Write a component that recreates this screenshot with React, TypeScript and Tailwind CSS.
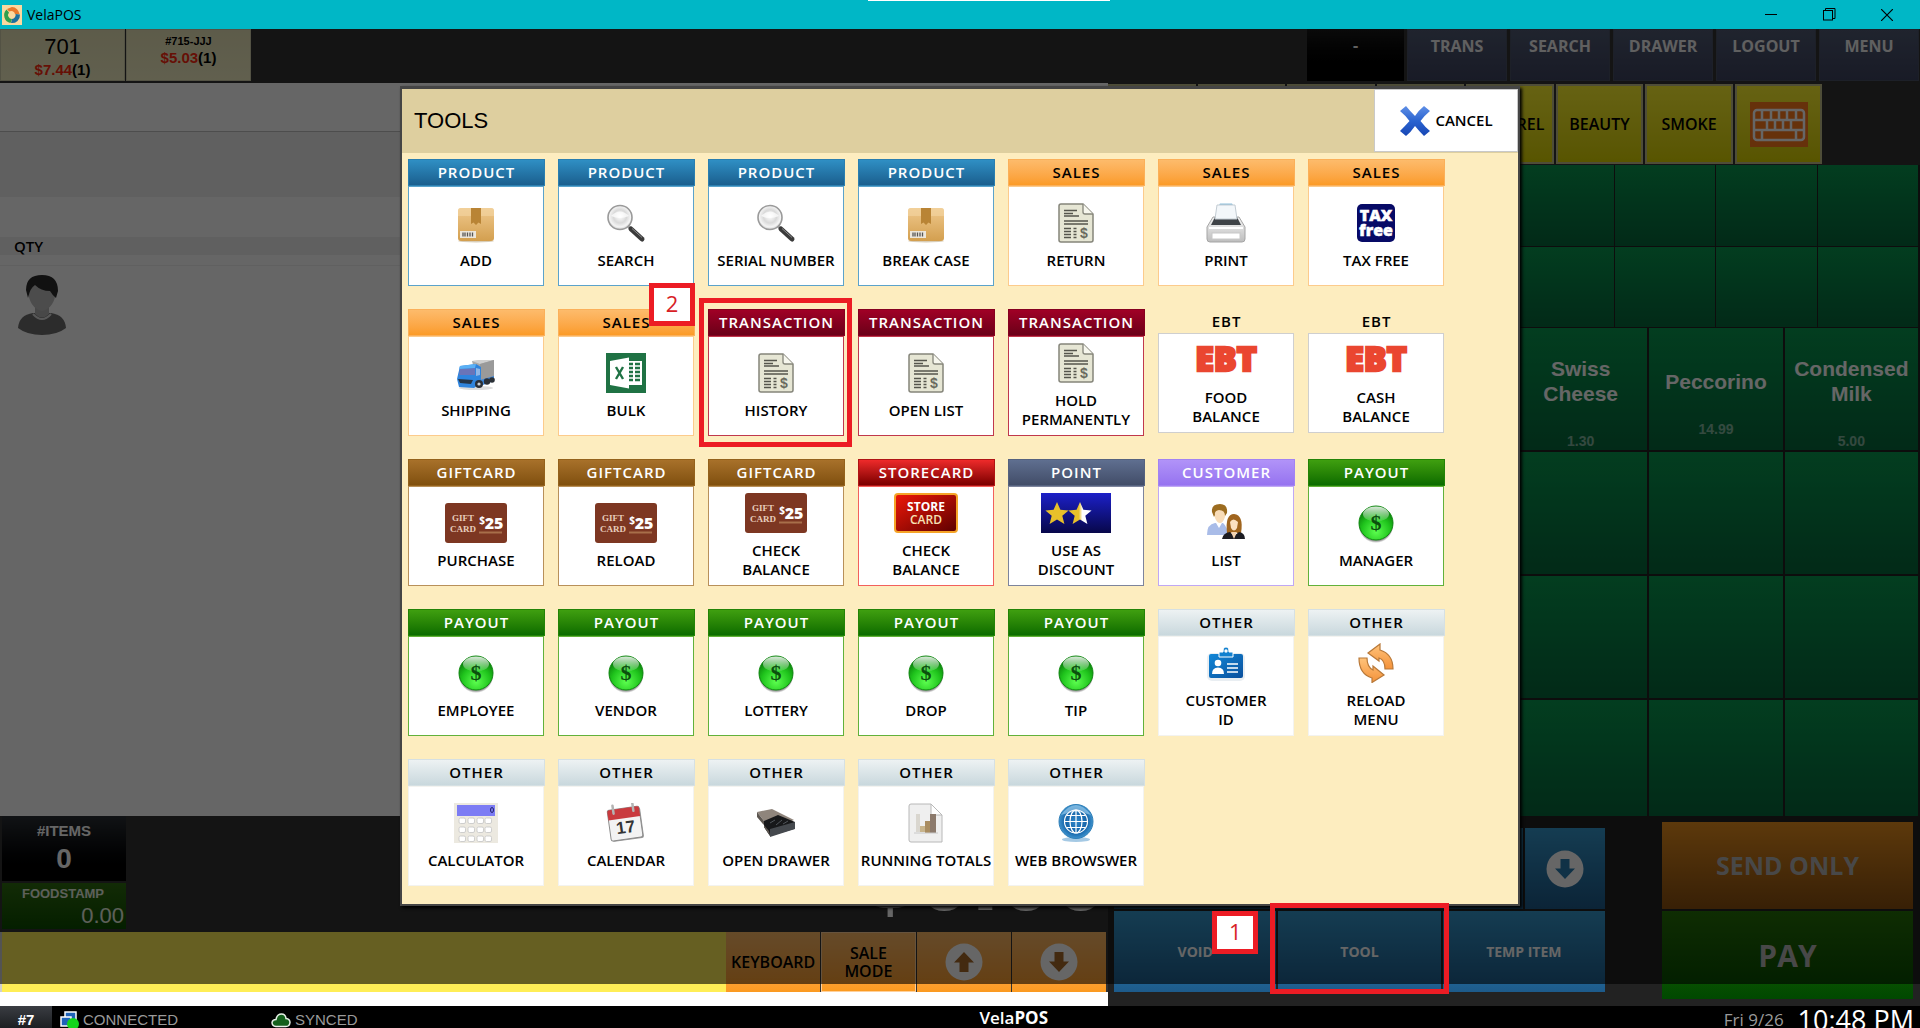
import React from 'react';

type IconName =
  | 'box' | 'lens' | 'doc' | 'printer' | 'taxfree' | 'truck' | 'excel' | 'ebt' | 'gift'
  | 'storecard' | 'stars' | 'people' | 'dollar' | 'badge' | 'reload' | 'calculator'
  | 'calendar' | 'drawer' | 'totals' | 'globe';

interface Tool {
  group: string;
  label: string;
  icon: IconName;
  marked?: boolean;
}

const groupStyles: Record<string, { head: string; body: string }> = {
  PRODUCT: { head: 'bg-linear-to-b from-[#2f8fc4] to-[#1b5f8e] border-[#2b7fb0] text-white', body: 'border-[#5ba3cb]' },
  SALES: { head: 'bg-linear-to-b from-[#fdbb6b] to-[#fb9b26] border-[#fbb05a] text-black', body: 'border-[#fccb8c]' },
  TRANSACTION: { head: 'bg-linear-to-b from-[#a00026] to-[#6b0018] border-[#86001f] text-white', body: 'border-[#c0384c]' },
  GIFTCARD: { head: 'bg-linear-to-b from-[#a8712a] to-[#80500e] border-[#94621c] text-white', body: 'border-[#b8905a]' },
  STORECARD: { head: 'bg-linear-to-b from-[#ee2a2a] to-[#7c0000] border-[#b01414] text-white', body: 'border-[#f2605c]' },
  POINT: { head: 'bg-linear-to-b from-[#5f6f90] to-[#424d68] border-[#55627f] text-white', body: 'border-[#7d849c]' },
  CUSTOMER: { head: 'bg-linear-to-b from-[#b193f8] to-[#9673f0] border-[#a283f3] text-white', body: 'border-[#c0a8f4]' },
  PAYOUT: { head: 'bg-linear-to-b from-[#3f9f10] to-[#0a6c00] border-[#238307] text-white', body: 'border-[#62b13a]' },
  OTHER: { head: 'bg-linear-to-b from-[#edf2f3] to-[#c9d8dd] border-[#d5e0e3] text-black', body: 'border-[#f3f3f0]' },
  EBT: { head: '', body: 'border-[#cfcfcf]' },
};

const tools: Tool[] = [
  { group: 'PRODUCT', label: 'ADD', icon: 'box' },
  { group: 'PRODUCT', label: 'SEARCH', icon: 'lens' },
  { group: 'PRODUCT', label: 'SERIAL NUMBER', icon: 'lens' },
  { group: 'PRODUCT', label: 'BREAK CASE', icon: 'box' },
  { group: 'SALES', label: 'RETURN', icon: 'doc' },
  { group: 'SALES', label: 'PRINT', icon: 'printer' },
  { group: 'SALES', label: 'TAX FREE', icon: 'taxfree' },
  { group: 'SALES', label: 'SHIPPING', icon: 'truck' },
  { group: 'SALES', label: 'BULK', icon: 'excel' },
  { group: 'TRANSACTION', label: 'HISTORY', icon: 'doc', marked: true },
  { group: 'TRANSACTION', label: 'OPEN LIST', icon: 'doc' },
  { group: 'TRANSACTION', label: 'HOLD\nPERMANENTLY', icon: 'doc' },
  { group: 'EBT', label: 'FOOD\nBALANCE', icon: 'ebt' },
  { group: 'EBT', label: 'CASH\nBALANCE', icon: 'ebt' },
  { group: 'GIFTCARD', label: 'PURCHASE', icon: 'gift' },
  { group: 'GIFTCARD', label: 'RELOAD', icon: 'gift' },
  { group: 'GIFTCARD', label: 'CHECK\nBALANCE', icon: 'gift' },
  { group: 'STORECARD', label: 'CHECK\nBALANCE', icon: 'storecard' },
  { group: 'POINT', label: 'USE AS\nDISCOUNT', icon: 'stars' },
  { group: 'CUSTOMER', label: 'LIST', icon: 'people' },
  { group: 'PAYOUT', label: 'MANAGER', icon: 'dollar' },
  { group: 'PAYOUT', label: 'EMPLOYEE', icon: 'dollar' },
  { group: 'PAYOUT', label: 'VENDOR', icon: 'dollar' },
  { group: 'PAYOUT', label: 'LOTTERY', icon: 'dollar' },
  { group: 'PAYOUT', label: 'DROP', icon: 'dollar' },
  { group: 'PAYOUT', label: 'TIP', icon: 'dollar' },
  { group: 'OTHER', label: 'CUSTOMER\nID', icon: 'badge' },
  { group: 'OTHER', label: 'RELOAD\nMENU', icon: 'reload' },
  { group: 'OTHER', label: 'CALCULATOR', icon: 'calculator' },
  { group: 'OTHER', label: 'CALENDAR', icon: 'calendar' },
  { group: 'OTHER', label: 'OPEN DRAWER', icon: 'drawer' },
  { group: 'OTHER', label: 'RUNNING TOTALS', icon: 'totals' },
  { group: 'OTHER', label: 'WEB BROWSWER', icon: 'globe' },
];

const arial = "'Liberation Sans', Arial, sans-serif";
const openSans = "'Open Sans', sans-serif";

/* Shared gradients, referenced by the icons below */
function IconDefs() {
  return (
    <svg width="0" height="0" className="absolute" aria-hidden="true">
      <defs>
        <linearGradient id="gBox" x1="0" y1="0" x2="0" y2="1">
          <stop offset="0" stopColor="#efc88c" />
          <stop offset="1" stopColor="#d39f4f" />
        </linearGradient>
        <radialGradient id="gLens" cx=".5" cy=".45" r=".55">
          <stop offset="0" stopColor="#ffffff" />
          <stop offset=".5" stopColor="#d9d9d9" />
          <stop offset=".8" stopColor="#f4f4f4" />
          <stop offset="1" stopColor="#cfcfcf" />
        </radialGradient>
        <radialGradient id="gCoin" cx=".5" cy=".75" r=".7">
          <stop offset="0" stopColor="#5dff50" />
          <stop offset=".6" stopColor="#1fc41c" />
          <stop offset="1" stopColor="#0b7a0c" />
        </radialGradient>
        <linearGradient id="gShine" x1="0" y1="0" x2="0" y2="1">
          <stop offset="0" stopColor="#fff" stopOpacity=".85" />
          <stop offset="1" stopColor="#fff" stopOpacity=".1" />
        </linearGradient>
        <linearGradient id="gStore" x1="0" y1="0" x2="1" y2="1">
          <stop offset="0" stopColor="#f01808" />
          <stop offset="1" stopColor="#5c0000" />
        </linearGradient>
        <linearGradient id="gPoint" x1="0" y1="0" x2="0" y2="1">
          <stop offset="0" stopColor="#1c20c8" />
          <stop offset="1" stopColor="#07074a" />
        </linearGradient>
        <linearGradient id="gHalf" x1="0" y1="0" x2="1" y2="0">
          <stop offset=".45" stopColor="#e8c02a" />
          <stop offset=".6" stopColor="#ffffff" />
        </linearGradient>
        <linearGradient id="gArrow" x1="0" y1="0" x2="0" y2="1">
          <stop offset="0" stopColor="#ffc37a" />
          <stop offset="1" stopColor="#f4923a" />
        </linearGradient>
        <radialGradient id="gGlobe" cx=".5" cy=".5" r=".55">
          <stop offset="0" stopColor="#2f86c8" />
          <stop offset=".6" stopColor="#1463a8" />
          <stop offset="1" stopColor="#4aa0d8" />
        </radialGradient>
        <linearGradient id="gBadge" x1="0" y1="0" x2="1" y2="1">
          <stop offset="0" stopColor="#1288d8" />
          <stop offset="1" stopColor="#0a4f9c" />
        </linearGradient>
        <linearGradient id="gCross" x1="0" y1="0" x2="0" y2="1">
          <stop offset="0" stopColor="#5f8fe6" />
          <stop offset=".5" stopColor="#2a63d0" />
          <stop offset="1" stopColor="#1746b4" />
        </linearGradient>
        <linearGradient id="gSteel" x1="0" y1="0" x2="0" y2="1">
          <stop offset="0" stopColor="#f4f4f4" />
          <stop offset="1" stopColor="#bdbdbd" />
        </linearGradient>
      </defs>
    </svg>
  );
}

const STAR = 'M0 -12 L3.4 -4.2 L11.6 -3.6 L5.3 1.8 L7.4 10 L0 5.6 L-7.4 10 L-5.3 1.8 L-11.6 -3.6 L-3.4 -4.2Z';

function ToolIcon({ name }: { name: IconName }) {
  switch (name) {
    case 'box':
      return (
        <svg width="40" height="40" viewBox="0 0 40 40">
          <ellipse cx="20" cy="38" rx="18" ry="1.5" fill="#d8cdb8" />
          <rect x="2" y="5" width="36" height="33" rx="3" fill="url(#gBox)" />
          <path d="M2 13 V8 Q2 5 5 5 H35 Q38 5 38 8 V13Z" fill="#f3d6a4" opacity=".6" />
          <path d="M15 5 H25 V21 L22.5 19.5 L20 22 L17.5 19.5 L15 21Z" fill="#b98435" />
          <rect x="4" y="28" width="16" height="7" fill="#ece6dc" />
          <path d="M7 29.5 V33.5 M9 29.5 V33.5 M11.5 29.5 V33.5 M14 29.5 V33.5 M16.5 29.5 V33.5" stroke="#555" strokeWidth="1.3" />
        </svg>
      );
    case 'lens':
      return (
        <svg width="40" height="40" viewBox="0 0 40 40">
          <path d="M22 23 L27 28" stroke="#aaa" strokeWidth="3" />
          <path d="M25 26 L36 36" stroke="#3a3a3a" strokeWidth="5" strokeLinecap="round" />
          <path d="M26 25.5 L36 34.5" stroke="#8a8a8a" strokeWidth="1" />
          <circle cx="14" cy="14.5" r="12" fill="url(#gLens)" stroke="#9a9a9a" strokeWidth="1.6" />
          <path d="M5 13 Q14 4 23 13 Q14 17 5 13Z" fill="#fff" opacity=".7" />
        </svg>
      );
    case 'doc':
      return (
        <svg width="40" height="40" viewBox="0 0 40 40">
          <path d="M5 1 H27 L37 11 V37 Q37 39 35 39 H5 Q3 39 3 37 V3 Q3 1 5 1Z" fill="#e6e6d4" stroke="#85857a" strokeWidth="1.5" />
          <path d="M27 1 V9 Q27 11 29 11 H37" fill="#f7f7ee" stroke="#85857a" strokeWidth="1.3" />
          <path d="M8 7.5 H21 M8 10.5 H17 M8 13 H23 M8 18 H32 M8 21 H32" stroke="#55554c" strokeWidth="1.3" />
          <path d="M8 25.5 H15 M8 28.5 H15 M8 31.5 H15 M8 34.5 H15 M17.5 25.5 H20.5 M17.5 28.5 H20.5 M17.5 31.5 H20.5 M17.5 34.5 H20.5" stroke="#55554c" strokeWidth="1.5" />
          <text x="28" y="35" fontSize="14" fontWeight="700" textAnchor="middle" fill="#6a6a5e" fontFamily={arial}>$</text>
        </svg>
      );
    case 'printer':
      return (
        <svg width="40" height="40" viewBox="0 0 40 40">
          <path d="M7 14 H33 L39 24 V36 Q39 39 36 39 H4 Q1 39 1 36 V24Z" fill="url(#gSteel)" stroke="#a5a5a5" />
          <path d="M9 14 H31 L35 22 H5Z" fill="#3f4347" />
          <path d="M14 0.5 H26 L28 4 H12Z" fill="#8fc0dc" />
          <path d="M11 2 H29 L31 16 H9Z" fill="#f3f7fa" stroke="#c3ccd3" />
          <rect x="6" y="30" width="28" height="6" fill="#fff" stroke="#c8c8c8" />
          <path d="M3 25 H37" stroke="#fff" strokeWidth="2" />
        </svg>
      );
    case 'taxfree':
      return (
        <svg width="40" height="40" viewBox="0 0 40 40">
          <rect x="1" y="1" width="38" height="38" rx="5" fill="#070a66" />
          <text x="20" y="18" fontSize="16" fontWeight="800" textAnchor="middle" fill="#fff" stroke="#fff" strokeWidth=".5" fontFamily={openSans}>TAX</text>
          <text x="20" y="33" fontSize="16" fontWeight="800" textAnchor="middle" fill="#fff" stroke="#fff" strokeWidth=".5" fontFamily={openSans}>free</text>
        </svg>
      );
    case 'truck':
      return (
        <svg width="40" height="40" viewBox="0 0 40 40">
          <ellipse cx="20" cy="35" rx="17" ry="2" fill="#dcdcdc" />
          <path d="M16 8 L38 7 V25 L22 31Z" fill="#a9a9a9" />
          <path d="M16 8 L22 7 L38 7 L24 11Z" fill="#cfcfcf" />
          <path d="M24 11 L38 7 V25 L24 29Z" fill="#9a9a9a" />
          <path d="M4 13 L20 11 L25 14 V30 L18 35 L3 34 L1 26Z" fill="#2f84dd" />
          <path d="M4 16 L19 15 L19 22 L3 22Z" fill="#6a74b8" />
          <path d="M3 16 L4 13 L20 11 L19 15Z" fill="#5bb0f5" />
          <path d="M20 15 L24 16 V22 L20 23Z" fill="#8fb6e6" />
          <path d="M2 26 L17 27 L15 31 L4 30Z" fill="#243447" />
          <path d="M24 27 L38 23 V28 L24 33Z" fill="#3d86d8" />
          <circle cx="23" cy="31" r="4" fill="#2a2f36" />
          <circle cx="23" cy="31" r="1.6" fill="#c9ced6" />
          <circle cx="31" cy="28.5" r="3.2" fill="#2a2f36" />
          <circle cx="36" cy="27" r="2.8" fill="#2a2f36" />
        </svg>
      );
    case 'excel':
      return (
        <svg width="40" height="40" viewBox="0 0 40 40">
          <rect width="40" height="40" fill="#1f7244" />
          <path d="M22 8 H36 V32 H22Z" fill="#fff" />
          <path d="M23 11 H27 M29 11 H34 M23 15 H27 M29 15 H34 M23 19 H27 M29 19 H34 M23 23 H27 M29 23 H34 M23 27 H27 M29 27 H34" stroke="#1f7244" strokeWidth="2.4" />
          <path d="M4 8 L23 4.5 V35.5 L4 32Z" fill="#fff" />
          <path d="M10 14 L17 26 M17 14 L10 26" stroke="#1f7244" strokeWidth="2.4" />
        </svg>
      );
    case 'ebt':
      return (
        <svg width="64" height="40" viewBox="0 0 64 40">
          <text x="32" y="31" fontSize="34" fontWeight="800" textAnchor="middle" fill="#ea4630" stroke="#ea4630" strokeWidth="2.5" fontFamily={openSans}>EBT</text>
        </svg>
      );
    case 'gift':
      return (
        <svg width="62" height="40" viewBox="0 0 62 40">
          <rect width="62" height="40" rx="3" fill="#7d3722" />
          <text x="18" y="18" fontSize="9" textAnchor="middle" fill="#e8cdbb" fontFamily="'Liberation Serif', serif">GIFT</text>
          <text x="18" y="29" fontSize="9" textAnchor="middle" fill="#e8cdbb" fontFamily="'Liberation Serif', serif">CARD</text>
          <text x="37" y="21" fontSize="10" fontWeight="700" textAnchor="middle" fill="#fff" fontFamily={openSans}>$</text>
          <text x="49" y="26" fontSize="16" fontWeight="800" textAnchor="middle" fill="#fff" fontFamily={openSans}>25</text>
          <path d="M34 29.5 H57" stroke="#a86f4a" strokeWidth="2" />
        </svg>
      );
    case 'storecard':
      return (
        <svg width="64" height="40" viewBox="0 0 64 40">
          <rect x="1" y="1" width="62" height="38" rx="3" fill="url(#gStore)" stroke="#f5a428" strokeWidth="2" />
          <text x="32" y="18" fontSize="12" fontWeight="700" textAnchor="middle" fill="#fff" fontFamily={openSans}>STORE</text>
          <text x="32" y="31" fontSize="12" fontWeight="600" textAnchor="middle" fill="#f6e2b4" fontFamily={openSans}>CARD</text>
        </svg>
      );
    case 'stars':
      return (
        <svg width="70" height="40" viewBox="0 0 70 40">
          <rect width="70" height="40" fill="url(#gPoint)" />
          <path d={STAR} transform="translate(16 21)" fill="#e8c02a" />
          <path d={STAR} transform="translate(39 21)" fill="url(#gHalf)" />
        </svg>
      );
    case 'people':
      return (
        <svg width="40" height="40" viewBox="0 0 40 40">
          <path d="M1 32 Q1 21 9 20 L17 20 Q21 23 22 32Z" fill="#a9bce8" />
          <path d="M10 20 L13 25 L16 20Z" fill="#fff" />
          <path d="M8 9 Q8 2 14 2 Q20 2 20 9 L19 14 Q17 20 14 20 Q11 20 9 15Z" fill="#f8dcb8" />
          <path d="M6 9 Q5 1 14 1 Q22 1 21 10 L19 13 Q19 7 13 7 Q8 8 9 12 L8 14Z" fill="#9c6c20" />
          <path d="M21 30 Q19 11 28 11 Q38 12 35 30Z" fill="#a0651e" />
          <path d="M24 19 Q27 14 32 19 L31 25 Q28 30 25 25Z" fill="#fbe0c0" />
          <path d="M16 36 Q17 30 24 29 L28 33 L33 29 Q39 30 39 36Z" fill="#1c1c22" />
          <path d="M25 29 L28 36 L31 29Z" fill="#f3d3b0" />
        </svg>
      );
    case 'dollar':
      return (
        <svg width="40" height="40" viewBox="0 0 40 40">
          <circle cx="20" cy="22.5" r="17" fill="#000" opacity=".18" />
          <circle cx="20" cy="21.5" r="17" fill="#000" opacity=".25" />
          <circle cx="20" cy="20" r="17" fill="url(#gCoin)" stroke="#0f8a10" />
          <ellipse cx="20" cy="11" rx="13" ry="7.5" fill="url(#gShine)" />
          <text x="20" y="27" fontSize="22" fontWeight="700" textAnchor="middle" fill="#0b4f0d" fontFamily="'Liberation Serif', serif">$</text>
        </svg>
      );
    case 'badge':
      return (
        <svg width="40" height="40" viewBox="0 0 40 40">
          <rect x="1" y="10" width="38" height="28" rx="5" fill="#e9eef2" />
          <rect x="3" y="11" width="34" height="24" rx="2" fill="url(#gBadge)" />
          <path d="M13 14 V9 H17 Q17 4 20 4 Q23 4 23 9 H27 V14Z" fill="#1180cf" stroke="#fff" />
          <circle cx="20" cy="8" r="1.7" fill="#fff" />
          <circle cx="12" cy="20" r="3.3" fill="#fff" />
          <path d="M6 31 Q6 24.5 12 24.5 Q18 24.5 18 31Z" fill="#fff" />
          <path d="M21 21 H32 M21 25 H32 M21 29 H32" stroke="#fff" strokeWidth="1.6" />
        </svg>
      );
    case 'reload':
      return (
        <svg width="40" height="40" viewBox="0 0 40 40">
          <path d="M12 10 L24 1 V7 Q37 11 37 26 H29 Q29 17 23 15 V18Z" fill="url(#gArrow)" stroke="#b87838" strokeWidth="1.2" />
          <path d="M28 32 L16 39.5 V35 Q3 31 3 15 H11 Q11 24 17 27 V23Z" fill="url(#gArrow)" stroke="#b87838" strokeWidth="1.2" />
        </svg>
      );
    case 'calculator':
      return (
        <svg width="44" height="40" viewBox="0 0 44 40">
          <rect width="44" height="40" fill="#ece9e0" />
          <rect x="3" y="2" width="38" height="11" fill="#7c7cf4" />
          <ellipse cx="38" cy="7" rx="1.5" ry="2.5" fill="none" stroke="#22226a" />
          {[15, 24, 33].map(y => (
            <g key={y} fill="#fff" stroke="#c4c4c4" strokeWidth=".8">
              <rect x="5" y={y} width="6.5" height="5.5" rx="1.5" />
              <rect x="14" y={y} width="6.5" height="5.5" rx="1.5" />
              <rect x="23" y={y} width="6.5" height="5.5" rx="1.5" />
              <rect x="31" y={y} width="6.5" height="5.5" rx="1.5" />
            </g>
          ))}
        </svg>
      );
    case 'calendar':
      return (
        <svg width="40" height="40" viewBox="0 0 40 40">
          <g transform="rotate(-8 20 20)">
            <rect x="4" y="6" width="32" height="31" rx="2" fill="#9c9c9c" />
            <rect x="3" y="5" width="32" height="31" rx="2" fill="#f3f3f3" stroke="#8a8a8a" />
            <path d="M3 15 V7 Q3 5 5 5 H33 Q35 5 35 7 V15Z" fill="#c93a3e" />
            <path d="M9 1 V9 M29 1 V9" stroke="#b3b3b3" strokeWidth="2.5" strokeLinecap="round" />
            <text x="19" y="30" fontSize="17" fontWeight="700" textAnchor="middle" fill="#333" fontFamily={arial}>17</text>
          </g>
        </svg>
      );
    case 'drawer':
      return (
        <svg width="40" height="40" viewBox="0 0 40 40">
          <path d="M1 9 L16 6 L38 17 L26 22 L8 18Z" fill="#8f857c" />
          <path d="M8 18 L22 12 L39 19 L38 26 L14 33 L8 24Z" fill="#17181a" />
          <path d="M1 9 L8 18 V24 L14 33 L13 28 L1 14Z" fill="#5c5650" />
          <path d="M14 26 L39 19 V26 L14 34Z" fill="#45494e" />
          <path d="M14 20 L19 17 M20 22 L26 17 M27 21 L32 18" stroke="#50555a" />
        </svg>
      );
    case 'totals':
      return (
        <svg width="40" height="40" viewBox="0 0 40 40">
          <path d="M5 1 H25 L36 12 V39 H5 Q3 39 3 37 V3 Q3 1 5 1Z" fill="#efefef" stroke="#b8b8b8" />
          <path d="M25 1 V12 H36Z" fill="#fff" stroke="#b8b8b8" />
          <rect x="10" y="11" width="4" height="18" fill="#d9d6cf" />
          <rect x="14" y="23" width="5" height="6" fill="#c8b48c" />
          <rect x="19" y="18" width="5" height="12" fill="#a98c60" />
          <rect x="24" y="11" width="6" height="19" fill="#8c7a6c" />
          <path d="M8 30 H32" stroke="#c8c8c8" />
        </svg>
      );
    case 'globe':
      return (
        <svg width="40" height="40" viewBox="0 0 40 40">
          <ellipse cx="20" cy="36.5" rx="14" ry="2.5" fill="#7fb2d8" opacity=".7" />
          <circle cx="20" cy="18.5" r="17" fill="url(#gGlobe)" stroke="#2f7fb8" />
          <path d="M5 12 Q20 -8 35 12 Q20 6 5 12Z" fill="#a9d6f2" opacity=".6" />
          <g fill="none" stroke="#fff" strokeWidth="1.2">
            <circle cx="20" cy="18.5" r="11.5" />
            <ellipse cx="20" cy="18.5" rx="6" ry="11.5" />
            <path d="M20 7 V30 M8.5 18.5 H31.5 M10.5 12.5 H29.5 M10.5 24.5 H29.5" />
          </g>
        </svg>
      );
    default:
      return null;
  }
}

function ArrowCircle({ down, color }: { down?: boolean; color: string }) {
  return (
    <svg width="38" height="38" viewBox="0 0 38 38" className={down ? 'rotate-180' : ''}>
      <circle cx="19" cy="19" r="18.5" fill="#fff" />
      <path d="M19 9 L29 19.5 H23.5 V29 H14.5 V19.5 H9Z" fill={color} />
    </svg>
  );
}

function Callout({ className, children }: { className: string; children: React.ReactNode }) {
  return (
    <span className={`absolute z-30 flex h-[43px] w-[46px] justify-center border-[5px] border-[#ec1c24] bg-white text-[22px] leading-[30px] font-normal text-[#d81e26] ${className}`}>
      {children}
    </span>
  );
}

function ToolTile({ tool }: { tool: Tool }) {
  const style = groupStyles[tool.group];
  const plain = tool.group === 'EBT';
  return (
    <button type="button" className="relative flex flex-col self-start text-[15px] leading-[19px] font-semibold text-black">
      <span
        className={`flex w-full items-center justify-center tracking-[1px] ${plain ? 'h-6' : 'h-[27px] border'} ${style.head}`}
      >
        {tool.group}
      </span>
      <span className={`flex h-[100px] w-[136px] flex-col items-center justify-center gap-2 border bg-white ${style.body}`}>
        <ToolIcon name={tool.icon} />
        <span className="whitespace-pre text-center">{tool.label}</span>
      </span>
      {tool.marked && (
        <>
          <span className="absolute -left-[9px] -right-[7px] -inset-y-[11px] border-[5px] border-[#ec1c24]" />
          <Callout className="-left-[59px] -top-[26px]">2</Callout>
        </>
      )}
    </button>
  );
}

function TitleBar() {
  return (
    <header className="relative flex h-[29px] shrink-0 items-center bg-[#00b7c6] pl-[2px]">
      <svg width="20" height="20" viewBox="0 0 20 20">
        <rect width="20" height="20" fill="#fbd9a0" />
        <path d="M10 2 A8 8 0 0 1 17.5 9 L13 9 A4 4 0 0 0 7 6.5 L5 4Z" fill="#e8792c" />
        <path d="M18 9.5 A8 8 0 0 1 9 18 L10 14 A4 4 0 0 0 13.5 9Z" fill="#1c6f9c" />
        <path d="M8.500 18 A8 8 0 0 1 4.5 4.5 L7 7.5 A4 4 0 0 0 10 14Z" fill="#2fa04c" />
      </svg>
      <h1 className="ml-[5px] text-[14px] text-black">VelaPOS</h1>
      <span className="absolute left-[868px] top-0 h-px w-[242px] bg-white" />
      <div className="ml-auto flex h-full items-center pr-1 text-black">
        <button type="button" aria-label="Minimize" className="flex h-full w-[58px] items-center justify-center">
          <svg width="12" height="12" viewBox="0 0 12 12"><path d="M0 5.5 H12" stroke="#000" /></svg>
        </button>
        <button type="button" aria-label="Restore" className="flex h-full w-[58px] items-center justify-center">
          <svg width="13" height="13" viewBox="0 0 13 13" fill="none" stroke="#000">
            <rect x=".5" y="2.5" width="9" height="9.5" />
            <path d="M2.5 2 V.5 H12 V10.5 H10" />
          </svg>
        </button>
        <button type="button" aria-label="Close" className="flex h-full w-[58px] items-center justify-center">
          <svg width="12" height="12" viewBox="0 0 12 12"><path d="M0 0 L12 12 M12 0 L0 12" stroke="#000" strokeWidth="1.2" /></svg>
        </button>
      </div>
    </header>
  );
}

function TopNav() {
  return (
    <nav className="flex h-[54px] shrink-0 bg-[#333333]">
      <button type="button" className="mr-px flex h-[52px] w-[125px] flex-col items-center border border-[#d0ccaa] bg-linear-to-b from-[#e8e4b8] to-[#f3efc4] pt-1 font-['Liberation_Sans'] text-black">
        <span className="text-[22px] leading-[26px]">701</span>
        <span className="text-[15px] leading-5 font-bold"><span className="text-[#ff2a10]">$7.44</span>(1)</span>
      </button>
      <button type="button" className="flex h-[52px] w-[125px] flex-col items-center border border-[#d0ccaa] bg-linear-to-b from-[#e8e4b8] to-[#f3efc4] pt-1 font-['Liberation_Sans'] font-bold text-black">
        <span className="text-[11px] leading-[14px]">#715-JJJ</span>
        <span className="text-[15px] leading-5"><span className="text-[#ff2a10]">$5.03</span>(1)</span>
      </button>
      <div className="ml-auto flex h-[52px] gap-[3px] pr-px text-[16px] leading-[32px] font-bold text-[#f0f0f0]">
        <button type="button" className="flex w-[97px] justify-center bg-linear-to-b from-[#1a1a1a] to-black">-</button>
        {['TRANS', 'SEARCH', 'DRAWER', 'LOGOUT', 'MENU'].map(item => (
          <button key={item} type="button" className="flex w-[100px] justify-center border border-[#4a5064] bg-linear-to-b from-[#505a73] to-[#3e4460]">
            {item}
          </button>
        ))}
      </div>
    </nav>
  );
}

function OrderPanel() {
  return (
    <section className="flex min-w-0 flex-1 flex-col bg-white pb-[14px]">
      <div className="h-[49px] border-b border-[#c0c0c0]" />
      <div className="h-[65px] bg-[#f0f0f0]" />
      <div className="h-10" />
      <div className="flex h-[18px] items-center bg-[#f0f0f0] pl-[14px] text-[15px] font-semibold text-black">QTY</div>
      <div className="h-[11px] border-b border-[#f0f0f0]" />
      <div className="flex-1 pl-[17px] pt-2">
        <svg width="50" height="62" viewBox="0 0 50 62">
          <path d="M1 54 Q2 41 16 39 L34 39 Q48 41 49 54 Q40 61 25 61 Q10 61 1 54Z" fill="#6e6e6e" />
          <path d="M18 33 H32 V40 Q25 47 18 40Z" fill="#b5b5b5" />
          <path d="M16 40 Q25 50 34 40" fill="none" stroke="#ddd" strokeWidth="2" />
          <path d="M11 16 Q12 4 25 4 Q38 4 39 16 Q38 34 25 37 Q12 34 11 16Z" fill="#bdbdbd" />
          <path d="M9 16 Q9 1 25 1 Q41 1 41 17 L39 24 Q36 22 33 17 Q24 17 18 11 Q13 14 11 24Z" fill="#2b2b2b" />
        </svg>
      </div>

      {/* totals strip */}
      <div className="flex h-[116px] items-end justify-between overflow-hidden bg-[#333333] font-['Liberation_Sans'] text-white">
        <div className="flex w-[126px] flex-col gap-[2px] self-start pl-[2px]">
          <div className="flex h-[65px] flex-col items-center bg-linear-to-b from-[#2c3036] to-black pt-[5px] font-bold">
            <span className="text-[15px] leading-5">#ITEMS</span>
            <span className="text-[28px] leading-9">0</span>
          </div>
          <div className="flex h-[46px] flex-col bg-linear-to-b from-[#2e6d10] to-[#0a4d00] pr-[2px] text-[#e8f0e0]">
            <span className="text-center text-[13px] leading-[22px] font-bold">FOODSTAMP</span>
            <span className="text-right text-[22px] leading-[22px]">0.00</span>
          </div>
        </div>
        <output className="pb-[7px] text-[98px] leading-none font-bold">$0.00</output>
      </div>

      <div className="flex h-[60px] bg-[#333333]">
        <input
          aria-label="Item code"
          className="min-w-0 flex-1 border-l-2 border-[#cfcfcf] bg-[#ffee56] px-3 text-2xl outline-none"
        />
        <div className="grid w-[382px] grid-cols-4 gap-px pr-[2px] text-[16px] leading-[18px] font-semibold text-black">
          <button type="button" className="bg-linear-to-b from-[#fdb966] to-[#fb9a20]">KEYBOARD</button>
          <button type="button" className="border border-[#ffd09a] bg-linear-to-b from-[#fdb966] to-[#fb9a20]">SALE<br />MODE</button>
          <button type="button" aria-label="Up" className="flex items-center justify-center bg-linear-to-b from-[#fdb966] to-[#fb9a20]"><ArrowCircle color="#a86a28" /></button>
          <button type="button" aria-label="Down" className="flex items-center justify-center bg-linear-to-b from-[#fdb966] to-[#fb9a20]"><ArrowCircle down color="#a86a28" /></button>
        </div>
      </div>
    </section>
  );
}

const products = [
  { name: 'Swiss\nCheese', price: '1.30' },
  { name: 'Peccorino', price: '14.99' },
  { name: 'Condensed\nMilk', price: '5.00' },
];

const blue = 'bg-linear-to-b from-[#3598cd] to-[#1d5a8a]';
const green = 'bg-linear-to-b from-[#089a50] to-[#05693c]';

function CatalogPanel() {
  return (
    <section className="flex w-[812px] shrink-0 flex-col bg-[#222222]">
      <div className="grid h-[82px] shrink-0 grid-cols-9 gap-[2px] bg-[#333333] pb-px pr-2 pt-px text-[16px] font-semibold text-black">
        {['', '', '', '', 'APPAREL', 'BEAUTY', 'SMOKE'].map((cat, i) => (
          <button key={i} type="button" aria-label={cat || `Category ${i + 1}`} className="border-2 border-[#c4c08c] bg-linear-to-b from-[#fff52e] to-[#dcd400]">{cat}</button>
        ))}
        <button type="button" aria-label="Keyboard" className="flex items-center justify-center border-2 border-[#c4c08c] bg-linear-to-b from-[#fff52e] to-[#dcd400]">
          <svg width="58" height="45" viewBox="0 0 58 45">
            <rect width="58" height="45" fill="#ff7a1c" />
            <g fill="none" stroke="#fff" strokeWidth="2.5">
              <rect x="4" y="8" width="50" height="30" rx="3" />
              <path d="M4 18 H54 M4 28 H54 M12 8 V18 M21 8 V18 M29 8 V18 M37 8 V18 M46 8 V18 M17 18 V28 M25 18 V28 M33 18 V28 M41 18 V28 M12 28 V38 M46 28 V38" />
            </g>
          </svg>
        </button>
      </div>

      <div className="grid h-[163px] shrink-0 grid-cols-8 grid-rows-2 gap-px pb-px pr-[2px]">
        {Array.from({ length: 16 }, (_, i) => <button key={i} type="button" aria-label={`Slot ${i + 1}`} className={green} />)}
      </div>

      <div className="grid min-h-0 flex-1 grid-cols-6 grid-rows-[122px_122px_122px_minmax(0,1fr)] gap-[2px] pr-[2px] font-['Liberation_Sans'] font-bold text-white">
        {Array.from({ length: 24 }, (_, i) => {
          const product = i >= 3 && i < 6 ? products[i - 3] : null;
          return (
            <button key={i} type="button" aria-label={product ? undefined : `Item ${i + 1}`} className={`flex flex-col items-center justify-center ${product ? 'pt-7' : ''} ${green}`}>
              {product && (
                <>
                  <span className="whitespace-pre text-[21px] leading-[25px]">{product.name}</span>
                  <span className="mt-[26px] text-[14px] leading-[18px] opacity-50">{product.price}</span>
                </>
              )}
            </button>
          );
        })}
      </div>

      <div className="flex h-[190px] shrink-0 items-start pl-[6px] pr-[7px] pt-[6px] font-bold text-white">
        <div className="mt-[6px] grid w-[491px] grid-cols-6 grid-rows-[81px_81px] gap-[2px] text-[14px]">
          <button type="button" aria-label="Previous page" className={`col-span-5 ${blue}`} />
          <button type="button" aria-label="Next page" className={`flex items-center justify-center ${blue}`}><ArrowCircle down color="#2a7cb0" /></button>
          <button type="button" className={`col-span-2 ${blue}`}>VOID</button>
          <button type="button" className={`relative col-span-2 ${blue}`}>
            TOOL
            <span className="absolute -inset-x-[8px] -top-[8px] -bottom-[2px] z-30 border-[5px] border-[#ec1c24]" />
            <Callout className="-left-[66px] top-0">1</Callout>
          </button>
          <button type="button" className={`col-span-2 ${blue}`}>TEMP ITEM</button>
        </div>
        <div className="ml-auto flex w-[251px] flex-col gap-[2px] text-[#b4b4b4] [text-shadow:1px_1px_0_#eee,-1px_-1px_0_#444]">
          <button type="button" className="h-[87px] bg-linear-to-b from-[#e88f1e] to-[#8c5010] text-[25px]">SEND ONLY</button>
          <button type="button" className="h-[88px] bg-linear-to-b from-[#267008] to-[#004800] text-[30px]">PAY</button>
        </div>
      </div>
    </section>
  );
}

function ToolsDialog() {
  return (
    <div role="dialog" aria-label="Tools" className="absolute inset-x-0 top-[57px] z-20 mx-auto w-[1120px] border-x-2 border-b-2 border-t-[3px] border-[#454545] bg-[#fdedbf] shadow-[2px_2px_3px_#000]">
      <div className="flex h-16 items-start justify-between bg-[#decf9f] pl-3">
        <h2 className="font-['Liberation_Sans'] text-[22px] leading-[64px] text-black">TOOLS</h2>
        <button type="button" className="flex h-[63px] w-[144px] items-center justify-center gap-1 border border-[#c9c9c9] bg-white text-[15px] font-semibold text-black">
          <svg width="32" height="32" viewBox="0 0 32 32">
            <path d="M7 1 Q11 6 16 11 Q20 5 25 1 L31 6 Q25 11 21.5 16 Q26 22 31 26 L25 31 Q20 26 16 21 Q12 27 7 31 L1 26 Q7 20 10.5 16 Q6 10 1 6Z" fill="url(#gCross)" />
          </svg>
          CANCEL
        </button>
      </div>
      <div className="grid grid-cols-[repeat(auto-fill,137px)] auto-rows-[127px] gap-x-[13px] gap-y-[23px] px-[6px] pb-[18px] pt-[6px]">
        {tools.map(tool => <ToolTile key={`${tool.group}-${tool.label}`} tool={tool} />)}
      </div>
    </div>
  );
}

function StatusBar() {
  return (
    <footer className="h-[22px] shrink-0 overflow-hidden bg-black">
      <div className="flex h-7 items-center text-[#9a9a9a]">
        <div className="flex h-full w-[52px] items-center justify-center bg-linear-to-b from-[#3a3d42] to-[#15171a] font-['Liberation_Sans'] text-[15px] font-bold text-white">#7</div>
        <div className="flex min-w-0 flex-1 items-center pl-2 font-['Liberation_Sans'] text-[15px]">
          <svg width="19" height="18" viewBox="0 0 19 18">
            <rect x="5" y="1" width="11" height="9" fill="#1f63b8" stroke="#fff" strokeWidth="1.5" />
            <rect x="1" y="6" width="10" height="9" fill="#1f63b8" stroke="#fff" strokeWidth="1.5" />
            <circle cx="13" cy="13" r="6" fill="#14d41c" />
          </svg>
          <span className="ml-1">CONNECTED</span>
          <svg width="20" height="16" viewBox="0 0 20 16" className="ml-[93px]">
            <path d="M5 14.5 Q1 14 1 10.5 Q1.5 7.5 5 7.5 Q6 2 10.5 2 Q14.5 2 15 6.5 Q19 7 19 10.5 Q18.5 14.5 15 14.5Z" fill="#14601c" stroke="#e6efe6" strokeWidth="1.5" />
          </svg>
          <span className="ml-1">SYNCED</span>
        </div>
        <div className="-mt-1 text-[17px] font-semibold text-white">Vela<span className="font-bold">POS</span></div>
        <div className="flex w-[872px] items-center justify-end gap-[14px] pr-[6px]">
          <span className="text-[17px]">Fri 9/26</span>
          <time className="text-[27px] leading-7 text-white">10:48 PM</time>
        </div>
      </div>
    </footer>
  );
}

export default function App() {
  return (
    <div className="flex h-screen flex-col overflow-hidden bg-black font-['Open_Sans',sans-serif]">
      <IconDefs />
      <TitleBar />
      <main className="relative flex min-h-0 flex-1 flex-col">
        <TopNav />
        <div className="flex min-h-0 flex-1">
          <OrderPanel />
          <CatalogPanel />
        </div>
        {/* dimmed backdrop stops short of the bottom edge */}
        <div className="absolute inset-x-0 bottom-[22px] top-0 z-10 bg-black/60" />
        <ToolsDialog />
      </main>
      <StatusBar />
    </div>
  );
}
